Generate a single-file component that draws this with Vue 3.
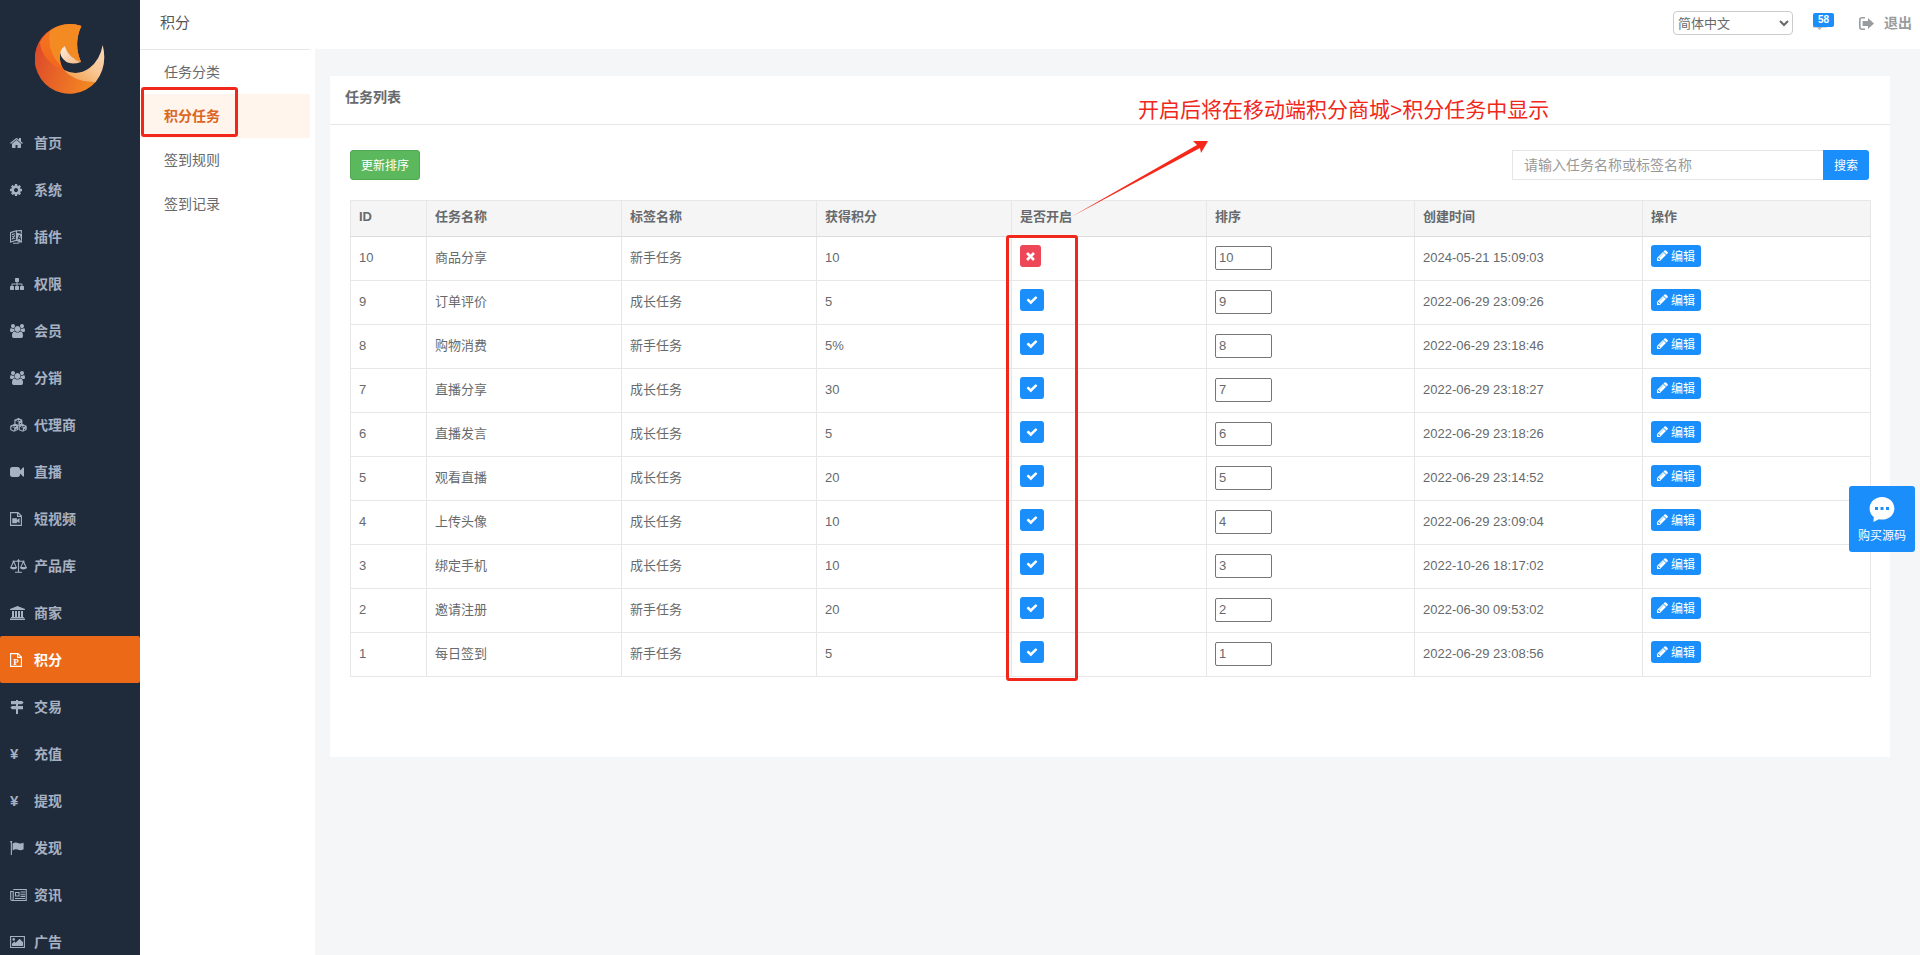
<script setup>
import { ref } from 'vue'

const home = 'M1472 992v480q0 26-19 45t-45 19h-384v-384h-256v384h-384q-26 0-45-19t-19-45v-480q0-1 .5-3t.5-3l575-474 575 474q1 2 1 6zm223-69l-62 74q-8 9-21 11h-3q-13 0-21-7l-692-577-692 577q-12 8-24 7-13-2-21-11l-62-74q-8-10-7-23.5t11-21.5l719-599q32-26 76-26t76 26l244 204v-195q0-14 9-23t23-9h192q14 0 23 9t9 23v408l219 182q10 8 11 21.5t-7 23.5z'
const cog = 'M1152 896q0-106-75-181t-181-75-181 75-75 181 75 181 181 75 181-75 75-181zm512-109v222q0 12-8 23t-20 13l-185 28q-19 54-39 91 35 50 107 138 10 12 10 25t-9 23q-27 37-99 108t-94 71q-12 0-26-9l-138-108q-44 23-91 38-16 136-29 186-7 28-36 28h-222q-14 0-24.5-8.5t-11.5-21.5l-28-184q-49-16-90-37l-141 107q-10 9-25 9-14 0-25-11-126-114-165-168-7-10-7-23 0-12 8-23 15-21 51-66.5t54-70.5q-27-50-41-99l-183-27q-13-2-21-12.5t-8-23.5v-222q0-12 8-23t19-13l186-28q14-46 39-92-40-57-107-138-10-12-10-24 0-10 9-23 26-36 98.5-107.5t94.5-71.5q13 0 26 10l138 107q44-23 91-38 16-136 29-186 7-28 36-28h222q14 0 24.5 8.5t11.5 21.5l28 184q49 16 90 37l142-107q9-9 24-9 13 0 25 10 129 119 165 170 7 8 7 22 0 12-8 23-15 21-51 66.5t-54 70.5q26 50 41 98l183 28q13 2 21 12.5t8 23.5z'
const sitemap = 'M1792 1248v320q0 40-28 68t-68 28h-320q-40 0-68-28t-28-68v-320q0-40 28-68t68-28h96v-192h-512v192h96q40 0 68 28t28 68v320q0 40-28 68t-68 28h-320q-40 0-68-28t-28-68v-320q0-40 28-68t68-28h96v-192h-512v192h96q40 0 68 28t28 68v320q0 40-28 68t-68 28h-320q-40 0-68-28t-28-68v-320q0-40 28-68t68-28h96v-192q0-52 38-90t90-38h512v-192h-96q-40 0-68-28t-28-68v-320q0-40 28-68t68-28h320q40 0 68 28t28 68v320q0 40-28 68t-68 28h-96v192h512q52 0 90 38t38 90v192h96q40 0 68 28t28 68z'
const users = 'M593 896q-162 5-265 128h-134q-82 0-138-40.5t-56-118.5q0-353 124-353 6 0 43.5 21t97.5 42.5 119 21.5q67 0 133-23-5 37-5 66 0 139 81 256zm1071 637q0 120-73 189.5t-194 69.5h-874q-121 0-194-69.5t-73-189.5q0-53 3.5-103.5t14-109 26.5-108.5 43-97.5 62-81 85.5-53.5 111.5-20q10 0 43 21.5t73 48 107 48 135 21.5 135-21.5 107-48 73-48 43-21.5q61 0 111.5 20t85.5 53.5 62 81 43 97.5 26.5 108.5 14 109 3.5 103.5zm-1024-1277q0 106-75 181t-181 75-181-75-75-181 75-181 181-75 181 75 75 181zm704 384q0 159-112.5 271.5t-271.5 112.5-271.5-112.5-112.5-271.5 112.5-271.5 271.5-112.5 271.5 112.5 112.5 271.5zm576 225q0 78-56 118.5t-138 40.5h-134q-103-123-265-128 81-117 81-256 0-29-5-66 66 23 133 23 59 0 119-21.5t97.5-42.5 43.5-21q124 0 124 353zm-128-609q0 106-75 181t-181 75-181-75-75-181 75-181 181-75 181 75 75 181z'
const video = 'M1792 352v1088q0 42-39 59-13 5-25 5-27 0-45-19l-403-403v166q0 119-84.5 203.5t-203.5 84.5h-704q-119 0-203.5-84.5t-84.5-203.5v-704q0-119 84.5-203.5t203.5-84.5h704q119 0 203.5 84.5t84.5 203.5v165l403-402q18-19 45-19 12 0 25 5 39 17 39 59z'
const check = 'M1671 566q0 40-28 68l-724 724-136 136q-28 28-68 28t-68-28l-136-136-362-362q-28-28-28-68t28-68l136-136q28-28 68-28t68 28l294 295 656-657q28-28 68-28t68 28l136 136q28 28 28 68z'
const times = 'M1490 1322q0 40-28 68l-136 136q-28 28-68 28t-68-28l-294-294-294 294q-28 28-68 28t-68-28l-136-136q-28-28-28-68t28-68l294-294-294-294q-28-28-28-68t28-68l136-136q28-28 68-28t68 28l294 294 294-294q28-28 68-28t68 28l136 136q28 28 28 68t-28 68l-294 294 294 294q28 28 28 68z'
const pencil = 'M491 1536l91-91-235-235-91 91v107h128v128h107zm523-928q0-22-22-22-10 0-17 7l-542 542q-7 7-7 17 0 22 22 22 10 0 17-7l542-542q7-7 7-17zm-54-192l416 416-832 832h-416v-416zm683 96q0 53-37 90l-166 166-416-416 166-165q36-38 90-38 53 0 91 38l235 234q37 39 37 91z'

const filePage = 'M.6.6H8L11.4 4v9.4H.6zM7.6.8v3.6h3.6'

// fill, stroke and cut paths are drawn in the units of the icon's own box
const nav = [
  { name: '首页', box: '96 0 1600 1792', width: 13, fill: home },
  { name: '系统', box: '128 0 1536 1792', width: 12, fill: cog },
  { name: '插件', box: '0 0 12 14', width: 12, fill: 'M6.2 2.4L12 4v8.8L6.2 11z', stroke: 'M.5 2.6L6.4.8v9.6L.5 12zM1.8 4.6l3-.8M2 9.4l2.8-4M2.4 6l2.2 3M6.8 1l4.6-.6v3M3 13.3h4.6l2-.9', cut: 'M7.8 9.6L9.4 5l1.5 5.6M8.3 8.3l2 .5' },
  { name: '权限', box: '0 0 1792 1792', width: 14, fill: sitemap },
  { name: '会员', box: '0 0 1920 1792', width: 15, fill: users },
  { name: '分销', box: '0 0 1920 1792', width: 15, fill: users },
  { name: '代理商', box: '0 0 17 14', width: 17, fill: 'M4.600 2.200L8.500.4 12.400 2.200 8.500 4zM.3 8.200L4.200 6.500 8.200 8.200 4.200 10zM8.800 8.200L12.800 6.500 16.700 8.200 12.800 10zM8.500 4l3.900-1.800v4.200L8.500 8zM4.200 10l4-1.800v3.600l-4 2zM12.800 10l3.900-1.800v3.600l-3.900 2z', stroke: 'M8.500 7.500L4.900 6V2.200L8.500.7l3.600 1.500M4.200 13.300L.8 11.700V8.200l3.400-1.500 3.600 1.500M12.800 13.300l-3.600-1.600V8.200l3.600-1.500 3.400 1.500', cut: 'M6.500 2.200l2 .8 2-.8M2.200 8.200l2 .9 2-.9M10.800 8.200l2 .9 2-.9M9.800 5.800l1.300-.6M5.600 11.700l1.300-.7M14.100 11.700l1.300-.7' },
  { name: '直播', box: '0 0 1792 1792', width: 14, fill: video },
  { name: '短视频', box: '0 0 12 14', width: 12, stroke: filePage, fill: 'M2.300 6.200h4.600v1.700L9.500 6v5.300L6.900 9.400v1.900H2.300z' },
  { name: '产品库', box: '0 0 17 14', width: 17, stroke: 'M2.5 2.2h12M8.5 1v12M5 13.3h7M3.6 2.4L.8 8.6h5.6zM13.4 2.4l-2.8 6.2h5.6z', fill: 'M.3 8.6h6.6q-.3 2-3.3 2t-3.3-2zM10.1 8.6h6.6q-.3 2-3.3 2t-3.3-2zM8.5 0l1.4 1.4-1.4 1.5-1.4-1.5z' },
  { name: '商家', box: '0 0 15 14', width: 15, fill: 'M7.5 0L15 3v1H0V3zM2 5h2v6H2zM5 5h2v6H5zM8 5h2v6H8zM11 5h2v6h-2zM1 11h13v1H1zM0 12.6h15V14H0z' },
  { name: '积分', box: '0 0 12 14', width: 12, stroke: filePage, mark: 'P', active: true },
  { name: '交易', box: '0 0 14 14', width: 14, fill: 'M6 0h2v1h4l1.6 1.6L12 4.2H1V1h5zM6 4.2h2V6h5v3.2H2L.4 7.6 2 6h4zM6 9.2h2V14H6z' },
  { name: '充值', yen: true },
  { name: '提现', yen: true },
  { name: '发现', box: '0 0 14 14', width: 14, fill: 'M.4 1.4a1 1 0 1 1 1.5 0V14H.8V1.6zM2.6 2.600Q5.400.8 8 2t5.600-.3v6.600Q10.800 10 8.200 8.800T2.600 9.400z' },
  { name: '资讯', box: '0 0 17 14', width: 17, stroke: 'M3.2 1.500h13v11H2Q.7 12.500.7 11V3.500h2.500v7.500q0 1.500-1.200 1.500M5.500 4.500h3.500v3.500H5.500zM10.500 4h4.500M10.500 6.200h4.500M10.500 8.400h4.500M5 10.500h10' },
  { name: '广告', box: '0 0 15 14', width: 15, stroke: 'M.6 1.500h13.800v11H.6z', fill: 'M2 11V8.800l2.300-2.300L5.600 7.800l4-4L13 7.200V11zM2.400 4.400a1.300 1.300 0 1 0 2.600 0 1.300 1.300 0 1 0-2.600 0z' }
]

const subnav = ['任务分类', '积分任务', '签到规则', '签到记录']
const current = '积分任务'

const columns = ['ID', '任务名称', '标签名称', '获得积分', '是否开启', '排序', '创建时间', '操作']

const tasks = ref([
  { id: 10, name: '商品分享', tag: '新手任务', points: '10', on: false, sort: '10', time: '2024-05-21 15:09:03' },
  { id: 9, name: '订单评价', tag: '成长任务', points: '5', on: true, sort: '9', time: '2022-06-29 23:09:26' },
  { id: 8, name: '购物消费', tag: '新手任务', points: '5%', on: true, sort: '8', time: '2022-06-29 23:18:46' },
  { id: 7, name: '直播分享', tag: '成长任务', points: '30', on: true, sort: '7', time: '2022-06-29 23:18:27' },
  { id: 6, name: '直播发言', tag: '成长任务', points: '5', on: true, sort: '6', time: '2022-06-29 23:18:26' },
  { id: 5, name: '观看直播', tag: '成长任务', points: '20', on: true, sort: '5', time: '2022-06-29 23:14:52' },
  { id: 4, name: '上传头像', tag: '成长任务', points: '10', on: true, sort: '4', time: '2022-06-29 23:09:04' },
  { id: 3, name: '绑定手机', tag: '成长任务', points: '10', on: true, sort: '3', time: '2022-10-26 18:17:02' },
  { id: 2, name: '邀请注册', tag: '新手任务', points: '20', on: true, sort: '2', time: '2022-06-30 09:53:02' },
  { id: 1, name: '每日签到', tag: '新手任务', points: '5', on: true, sort: '1', time: '2022-06-29 23:08:56' }
])
const keyword = ref('')
</script>

<template>
  <div class="app">
    <aside class="side">
      <div class="brand">
        <svg class="logo" viewBox="0 0 70 70" aria-hidden="true">
          <defs>
            <linearGradient id="lg-base" x1="0" y1="0.4" x2="1" y2="0.8">
              <stop offset="0" stop-color="#dd4a2a" />
              <stop offset="1" stop-color="#f58a22" />
            </linearGradient>
            <linearGradient id="lg-mid" x1="0" y1="0" x2="0" y2="1">
              <stop offset="0" stop-color="#f4781f" />
              <stop offset="1" stop-color="#f3641e" />
            </linearGradient>
            <linearGradient id="lg-tail" x1="1" y1="0" x2="0.1" y2="1">
              <stop offset="0" stop-color="#f6d9bb" />
              <stop offset="0.5" stop-color="#f8c793" />
              <stop offset="1" stop-color="#f49a45" />
            </linearGradient>
            <linearGradient id="lg-tip" x1="0" y1="0" x2="1" y2="1">
              <stop offset="0" stop-color="#fdeee0" />
              <stop offset="1" stop-color="#f6b780" />
            </linearGradient>
          </defs>
          <path fill="url(#lg-base)" d="M46.300 2A34.900 34.900 0 1 0 60.700 58Q45 57 30 47Q24 40 25 31Q26 25 29.700 22Q34 34 46 38Q38 20 46.300 2z" />
          <path fill="url(#lg-mid)" d="M46.300 2A34.900 34.900 0 0 0 5 18Q6 36 30 48Q24 40 25 31Q26 25 29.700 22Q34 34 46 38Q38 20 46.300 2z" />
          <path fill="#f48a22" d="M46.300 2A34.900 34.900 0 0 0 15 7Q11 28 27 43Q24 38 25 31Q26 25 29.700 22Q34 34 46 38Q38 20 46.300 2z" />
          <path fill="url(#lg-tip)" d="M29.700 22Q34 34 46 38Q32 43 26 32Q24 26 29.700 22z" />
          <path fill="url(#lg-tail)" d="M67.700 21Q73 42 60.700 58Q41 59 28 45.500Q42 53 54.500 44Q65 36 67.700 21z" />
        </svg>
      </div>
      <nav class="nav">
        <a v-for="item in nav" :key="item.name" href="#" class="nav-item" :class="{ active: item.active }">
          <span class="nav-icon">
            <span v-if="item.yen" class="yen">¥</span>
            <svg v-else :viewBox="item.box" :width="item.width" height="14" aria-hidden="true">
              <path v-if="item.fill" :d="item.fill" fill="currentColor" />
              <path v-if="item.stroke" :d="item.stroke" fill="none" stroke="currentColor" stroke-width="1.1" />
              <path v-if="item.cut" :d="item.cut" fill="none" stroke="#1f2b3b" stroke-width="0.9" />
              <text v-if="item.mark" x="6" y="12" text-anchor="middle" class="file-mark">{{ item.mark }}</text>
            </svg>
          </span>
          <span>{{ item.name }}</span>
        </a>
      </nav>
    </aside>

    <div class="page">
      <header class="topbar">
        <h1 class="module">积分</h1>
        <div class="tools">
          <select class="lang" aria-label="语言">
            <option>简体中文</option>
          </select>
          <a href="#" class="messages" aria-label="消息">
            <svg viewBox="0 0 22 17" width="22" height="17" aria-hidden="true">
              <path fill="#b4b8bb" d="M0 3h14v11.500H9L6.500 17 4 14.500H0z" />
            </svg>
            <span class="badge">58</span>
          </a>
          <a href="#" class="logout">
            <svg viewBox="0 0 15 13" width="15" height="13" aria-hidden="true">
              <path fill="none" stroke="currentColor" stroke-width="1.600" d="M6 .8H3Q.8.8.8 3v7Q.8 12.200 3 12.200h3" />
              <path fill="currentColor" d="M3.600 4H9V1l6 5.500L9 12V9H3.600z" />
            </svg>
            <span>退出</span>
          </a>
        </div>
      </header>

      <div class="body">
        <nav class="subnav">
          <ul>
            <li v-for="s in subnav" :key="s" :class="{ current: s === current }">
              <a href="#">{{ s }}</a>
              <span v-if="s === current" class="frame sub-frame"></span>
            </li>
          </ul>
        </nav>

        <main class="main">
          <section class="panel">
            <h2 class="panel-title">任务列表</h2>
            <div class="panel-body">
              <div class="toolbar">
                <button type="button" class="btn-sort">更新排序</button>
                <form class="search" @submit.prevent>
                  <input v-model="keyword" type="text" placeholder="请输入任务名称或标签名称" aria-label="请输入任务名称或标签名称" />
                  <button type="submit">搜索</button>
                </form>
              </div>

              <div class="table-wrap">
                <table>
                  <colgroup>
                    <col class="c-id" />
                    <col class="c-mid" />
                    <col class="c-mid" />
                    <col class="c-mid" />
                    <col class="c-mid" />
                    <col class="c-sort" />
                    <col class="c-wide" />
                    <col class="c-wide" />
                  </colgroup>
                  <thead>
                    <tr>
                      <th v-for="c in columns" :key="c" scope="col">{{ c }}</th>
                    </tr>
                  </thead>
                  <tbody>
                    <tr v-for="t in tasks" :key="t.id">
                      <td>{{ t.id }}</td>
                      <td>{{ t.name }}</td>
                      <td>{{ t.tag }}</td>
                      <td>{{ t.points }}</td>
                      <td>
                        <button type="button" class="mini" :class="{ off: !t.on }" :aria-label="t.on ? '已开启' : '已关闭'" @click="t.on = !t.on">
                          <svg v-if="t.on" viewBox="0 0 1792 1792" width="12" height="12" aria-hidden="true"><path :d="check" fill="currentColor" /></svg>
                          <svg v-else viewBox="256 256 1280 1280" width="9" height="10" aria-hidden="true"><path :d="times" fill="currentColor" /></svg>
                        </button>
                      </td>
                      <td><input v-model="t.sort" class="sort" type="text" :aria-label="t.name + ' 排序'" /></td>
                      <td>{{ t.time }}</td>
                      <td>
                        <button type="button" class="mini">
                          <svg viewBox="128 128 1536 1536" width="11" height="11" aria-hidden="true"><path :d="pencil" fill="currentColor" /></svg>
                          编辑
                        </button>
                      </td>
                    </tr>
                  </tbody>
                </table>

                <div class="callout">
                  <span class="frame column-frame"></span>
                  <svg class="arrow" viewBox="0 0 138 78" width="138" height="78" aria-hidden="true">
                    <path fill="#f5281a" d="M0 77L126 5L122 1L137 1L130 13L129 8z" />
                  </svg>
                  <span class="note">开启后将在移动端积分商城&gt;积分任务中显示</span>
                </div>
              </div>
            </div>
          </section>
        </main>
      </div>
    </div>

    <a href="#" class="buy">
      <svg viewBox="0 0 26 26" width="26" height="26" aria-hidden="true">
        <path fill="#fff" d="M13 1C6 1 .6 6 .6 12.400c0 3.600 1.600 6.600 4.200 8.700L4.400 26l5.400-2.800c1 .3 2 .4 3.200.4 7 0 12.400-5 12.400-11.200S20 1 13 1z" />
        <path fill="#1a8ffc" d="M6 11h3v3H6zM11.500 11h3v3h-3zM17 11h3v3h-3z" />
      </svg>
      <span>购买源码</span>
    </a>
  </div>
</template>

<style>
body {
  background: #f5f6f8;
}
</style>

<style scoped>
* {
  box-sizing: border-box;
}

.app {
  display: flex;
  height: 100vh;
  overflow: hidden;
  color: #676a6c;
  background: #f5f6f8;
  font: 13px/24px "Liberation Sans", "Noto Sans CJK SC", sans-serif;
}

a {
  color: inherit;
  text-decoration: none;
}

button,
input,
select {
  font-family: inherit;
  color: inherit;
}

/* left navigation */
.side {
  flex: 0 0 140px;
  background: #1f2b3b;
}

.brand {
  display: flex;
  justify-content: center;
  padding: 24px 0 25px;
}

.logo {
  width: 70px;
  height: 70px;
}

.nav-item {
  display: flex;
  align-items: center;
  height: 47px;
  padding-left: 10px;
  color: #a7b1c2;
  font-size: 14px;
  font-weight: 600;
}

.nav-item.active {
  color: #fff;
  background: #ec6a17;
  border-radius: 2px;
}

.nav-icon {
  display: flex;
  flex: 0 0 24px;
}

.yen {
  font-size: 15px;
  line-height: 16px;
}

.file-mark {
  fill: currentColor;
  font: bold 9px "Liberation Serif", serif;
}

/* top bar */
.page {
  flex: 1;
  min-width: 0;
  display: flex;
  flex-direction: column;
}

.topbar {
  display: flex;
  flex: 0 0 49px;
  justify-content: space-between;
  align-items: center;
  padding: 0 8px 3px 20px;
  background: #fff;
}

.module {
  margin: 0;
  font-size: 15px;
  font-weight: 400;
  color: #555;
}

.tools {
  display: flex;
  align-items: center;
}

.lang {
  width: 120px;
  height: 24px;
  padding: 0;
  border: 1px solid #ccc;
  border-radius: 4px;
  background: #fff;
  font-size: 13px;
}

.messages {
  position: relative;
  display: flex;
  margin: 0 24px 4px 20px;
}

.badge {
  position: absolute;
  left: 0;
  top: 0;
  width: 21px;
  height: 14px;
  border-radius: 2px;
  background: #1a8ffc;
  color: #fff;
  font-size: 10px;
  font-weight: 700;
  line-height: 14px;
  text-align: center;
}

.logout {
  display: flex;
  align-items: center;
  gap: 10px;
  color: #999c9e;
  font-size: 14px;
  font-weight: 600;
}

/* second-level navigation */
.body {
  flex: 1;
  display: flex;
}

.subnav {
  flex: 0 0 175px;
  background: #fff;
}

.subnav ul {
  margin: 0 5px 0 0;
  padding: 0;
  list-style: none;
  border-top: 1px solid #e7e7e7;
}

.subnav li {
  position: relative;
}

.subnav a {
  display: block;
  padding-left: 24px;
  font-size: 14px;
  line-height: 44px;
}

.subnav .current a {
  background: #fff5ec;
  color: #dd6524;
  font-weight: 600;
}

.frame {
  position: absolute;
  border: 3px solid #f0281c;
  border-radius: 3px;
  pointer-events: none;
}

.sub-frame {
  left: 1px;
  top: -7px;
  width: 97px;
  height: 50px;
}

/* content */
.main {
  flex: 1;
  min-width: 0;
  padding: 27px 30px 0 15px;
}

.panel {
  background: #fff;
}

.panel-title {
  margin: 0;
  padding: 9px 15px 15px;
  border-bottom: 1px solid #e7e7e7;
  font-size: 14px;
  font-weight: 600;
  line-height: 24px;
}

.panel-body {
  padding: 25px 21px 80px 20px;
}

.toolbar {
  display: flex;
  justify-content: space-between;
  margin-bottom: 20px;
}

.btn-sort {
  width: 70px;
  height: 30px;
  padding: 0 0 2px;
  border: 1px solid #52a852;
  border-radius: 3px;
  background: #5cb85c;
  color: #fff;
  font-size: 12px;
}

.search {
  display: flex;
}

.search input {
  width: 311px;
  height: 30px;
  padding: 0 11px;
  border: 1px solid #e5e6e7;
  border-right: 0;
  border-radius: 1px 0 0 1px;
  background: #fff;
  font-size: 14px;
}

.search input::placeholder {
  color: #999;
}

.search button {
  width: 46px;
  height: 30px;
  padding: 0 0 2px;
  border: 0;
  border-radius: 0 3px 3px 0;
  background: #1a8ffc;
  color: #fff;
  font-size: 12px;
}

.table-wrap {
  position: relative;
}

table {
  width: 100%;
  table-layout: fixed;
  border-collapse: collapse;
}

.c-id {
  width: 76px;
}

.c-mid {
  width: 195px;
}

.c-sort {
  width: 208px;
}

.c-wide {
  width: 228px;
}

th,
td {
  padding: 8px 8px 0;
  border: 1px solid #e7e7e7;
  text-align: left;
  vertical-align: top;
}

th {
  height: 36px;
  padding-top: 4px;
  border-bottom-color: #ddd;
  background: #f5f5f6;
  font-weight: 600;
}

td {
  height: 44px;
  line-height: 26px;
}

.mini {
  display: flex;
  align-items: center;
  gap: 3px;
  height: 22px;
  padding: 0 6px 1px;
  border: 0;
  border-radius: 3px;
  background: #1a8ffc;
  color: #fff;
  font-size: 12px;
}

.mini.off {
  background: #ed4758;
}

.sort {
  display: block;
  width: 57px;
  height: 24px;
  margin-top: 1px;
  padding: 0 3px 2px;
  border: 1px solid #767676;
  border-radius: 2px;
  background: #fff;
  font-size: 13px;
}

/* remark drawn over the table */
.callout {
  position: absolute;
  left: calc(100% * 656 / 1519);
  top: 0;
  bottom: 0;
  width: 72px;
  pointer-events: none;
}

.column-frame {
  inset: 35px 0 -4px;
}

.arrow {
  position: absolute;
  left: 65px;
  top: -60px;
}

.note {
  position: absolute;
  left: 132px;
  top: -105px;
  color: #f0281c;
  font-size: 21px;
  line-height: 30px;
  white-space: nowrap;
}

.buy {
  position: absolute;
  right: 5px;
  top: 486px;
  display: flex;
  flex-direction: column;
  align-items: center;
  gap: 2px;
  width: 66px;
  height: 66px;
  padding-top: 10px;
  border-radius: 3px;
  background: #1a8ffc;
  color: #fff;
  font-size: 12px;
}
</style>
